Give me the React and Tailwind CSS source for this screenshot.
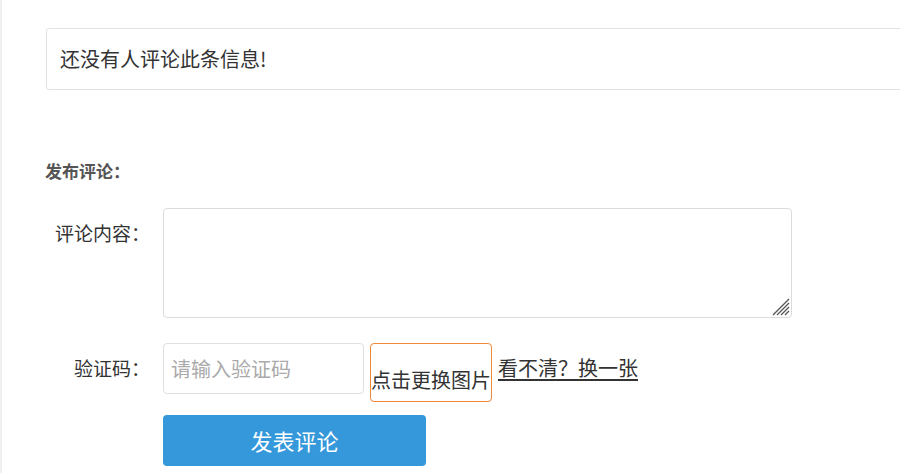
import React from 'react';

const font = { fontFamily: '"Noto Sans CJK SC", "Noto Sans", sans-serif' };

const ResizeGrip = () => (
    <svg className="absolute right-[2px] bottom-[2px] pointer-events-none" width="18" height="18" viewBox="0 0 18 18">
        <g stroke="#555" strokeWidth="1.3">
            <line x1="17" y1="1" x2="1" y2="17" />
            <line x1="17" y1="5" x2="5" y2="17" />
            <line x1="17" y1="9" x2="9" y2="17" />
            <line x1="17" y1="13" x2="13" y2="17" />
        </g>
    </svg>
);

const App = () => {
    return (
        <div className="h-[473px] w-[900px] overflow-hidden bg-white border-l-2 border-[#f0f0f0] text-[#333]" style={font}>
            {/* No comments */}
            <div className="pt-[28px] pl-[44px]">
                <div className="w-[900px] h-[62px] border border-[#e3e3e3] rounded-[3px] flex items-center pl-[13px] text-[20px] text-[#333]">
                    还没有人评论此条信息!
                </div>
            </div>

            {/* Post comment */}
            <div className="pl-[43px] mt-[69px] h-[24px] flex items-center text-[17px] font-bold text-[#555]">
                发布评论：
            </div>

            <form className="mt-[25px]" onSubmit={e => e.preventDefault()}>
                <div className="flex items-start">
                    <label className="w-[148px] text-right text-[19px] leading-[26px] pt-[12px] text-[#333]">评论内容：</label>
                    <div className="relative ml-[13px] w-[629px] h-[110px]">
                        <textarea className="w-full h-full border border-[#dcdcdc] rounded-[4px] outline-none resize-none" />
                        <ResizeGrip />
                    </div>
                </div>

                <div className="flex items-start mt-[25px]">
                    <label className="w-[148px] text-right text-[19px] leading-[50px] text-[#333]">验证码：</label>
                    <input
                        type="text"
                        placeholder="请输入验证码"
                        className="ml-[13px] w-[201px] h-[51px] border border-[#e0e0e0] rounded-[4px] px-[7px] text-[20px] outline-none placeholder:text-[#aaa]"
                    />
                    <div className="ml-[6px] w-[122px] h-[59px] border border-[#f0883a] rounded-[4px] flex items-end justify-center pb-[9px] text-[20px] leading-[24px] text-[#333] whitespace-nowrap">
                        点击更换图片
                    </div>
                    <a href="#" className="ml-[6px] text-[20px] leading-[50px] text-[#333] underline underline-offset-[3px]">看不清？换一张</a>
                </div>

                <div className="flex mt-[13px]">
                    <button type="submit" className="ml-[161px] w-[263px] h-[51px] bg-[#3498db] rounded-[4px] text-white text-[22px]">
                        发表评论
                    </button>
                </div>
            </form>
        </div>
    );
};

export default App;
